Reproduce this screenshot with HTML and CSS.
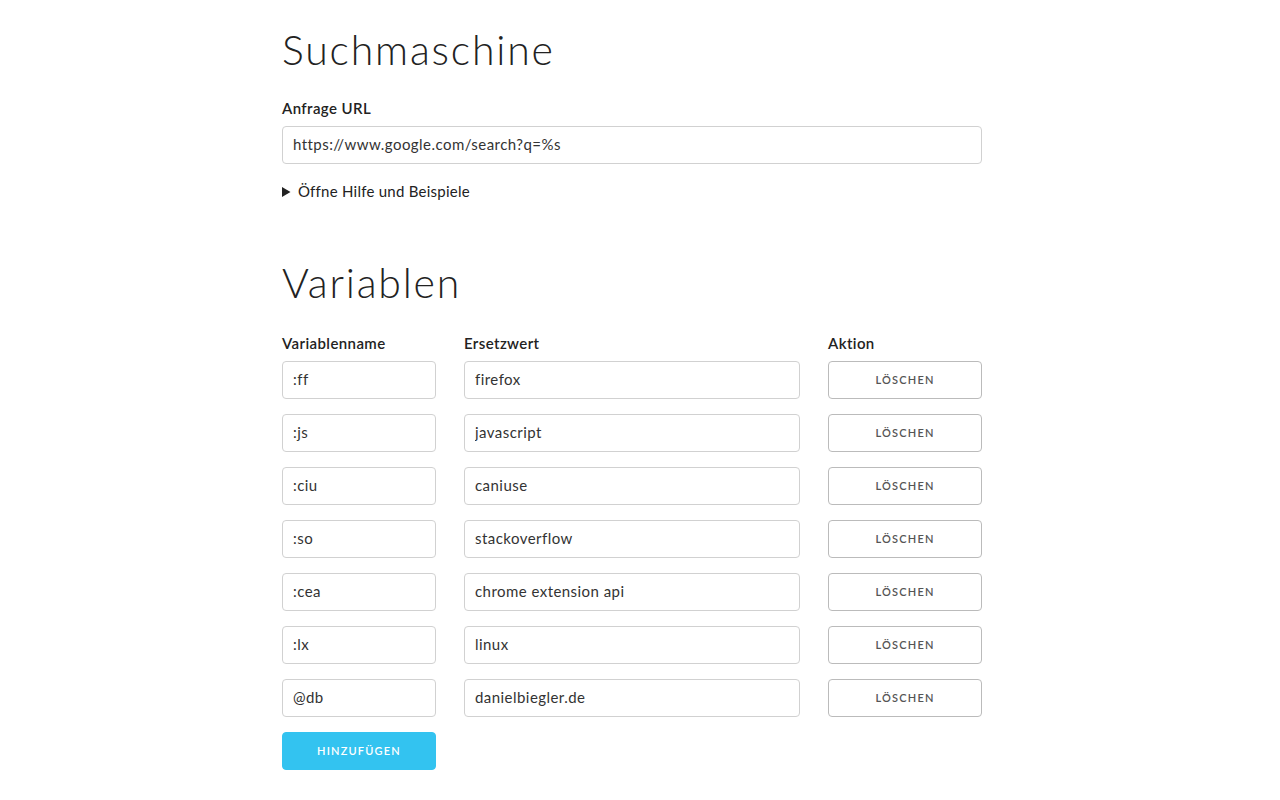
FILE: index.html
```html
<!DOCTYPE html>
<html lang="de">
<head>
<meta charset="utf-8">
<title>Optionen</title>
<link rel="stylesheet" href="styles.css">
</head>
<body>
<main class="container">
  <section class="engine">
    <h1 class="title">Suchmaschine</h1>
    <label class="field-label" for="url">Anfrage URL</label>
    <input class="text-input full" id="url" type="text" value="https://www.google.com/search?q=%s">
    <details class="help">
      <summary>Öffne Hilfe und Beispiele</summary>
    </details>
  </section>

  <section class="variables">
    <h1 class="title title-vars">Variablen</h1>
    <div class="var-grid">
      <div class="col-head">Variablenname</div>
      <div class="col-head">Ersetzwert</div>
      <div class="col-head">Aktion</div>

      <input class="text-input" type="text" value=":ff">
      <input class="text-input" type="text" value="firefox">
      <button class="btn" type="button">Löschen</button>

      <input class="text-input" type="text" value=":js">
      <input class="text-input" type="text" value="javascript">
      <button class="btn" type="button">Löschen</button>

      <input class="text-input" type="text" value=":ciu">
      <input class="text-input" type="text" value="caniuse">
      <button class="btn" type="button">Löschen</button>

      <input class="text-input" type="text" value=":so">
      <input class="text-input" type="text" value="stackoverflow">
      <button class="btn" type="button">Löschen</button>

      <input class="text-input" type="text" value=":cea">
      <input class="text-input" type="text" value="chrome extension api">
      <button class="btn" type="button">Löschen</button>

      <input class="text-input" type="text" value=":lx">
      <input class="text-input" type="text" value="linux">
      <button class="btn" type="button">Löschen</button>

      <input class="text-input" type="text" value="@db">
      <input class="text-input" type="text" value="danielbiegler.de">
      <button class="btn" type="button">Löschen</button>

      <button class="btn btn-primary" type="button">Hinzufügen</button>
    </div>
  </section>
</main>
</body>
</html>
```

FILE: styles.css
```css
html, body {
  margin: 0;
  padding: 0;
  background: #fff;
}

body {
  padding-right: 16px;
  font-family: Lato, "Open Sans", sans-serif;
  font-size: 15px;
  line-height: 1.6;
  color: #222;
}

.container {
  width: 700px;
  margin: 0 auto;
  padding-top: 26px;
}

.title {
  margin: 0 0 22px;
  font-size: 41px;
  line-height: 48px;
  font-weight: 300;
  letter-spacing: 1.8px;
  color: #222;
}

.title-vars {
  margin-top: 56px;
  margin-bottom: 24px;
}

.field-label {
  display: block;
  margin-bottom: 6px;
  font-weight: 600;
  line-height: 24px;
  letter-spacing: 0.4px;
}

.text-input {
  box-sizing: border-box;
  height: 38px;
  padding: 5px 10px 7px;
  border: 1px solid #d1d1d1;
  border-radius: 4px;
  background: #fff;
  font-family: inherit;
  font-size: 15px;
  letter-spacing: 0.45px;
  color: #333;
  margin: 0;
  width: 100%;
}

.text-input.full {
  display: block;
  margin-bottom: 15px;
}

.help summary {
  line-height: 24px;
  letter-spacing: 0.25px;
  cursor: pointer;
  color: #222;
}

.var-grid {
  display: grid;
  grid-template-columns: 154px 336px 154px;
  column-gap: 28px;
  row-gap: 15px;
}

.col-head {
  font-weight: 600;
  line-height: 24px;
  letter-spacing: 0.4px;
  margin-bottom: -9px;
}

.btn {
  box-sizing: border-box;
  height: 38px;
  padding: 0 20px 1px;
  border: 1px solid #bbb;
  border-radius: 4px;
  background: transparent;
  color: #555;
  font-family: inherit;
  font-size: 11px;
  font-weight: 600;
  letter-spacing: 1.2px;
  text-transform: uppercase;
  line-height: 35px;
  cursor: pointer;
  width: 100%;
}

.btn-primary {
  grid-column: 1;
  background: #33c3f0;
  border-color: #33c3f0;
  color: #fff;
}
```
